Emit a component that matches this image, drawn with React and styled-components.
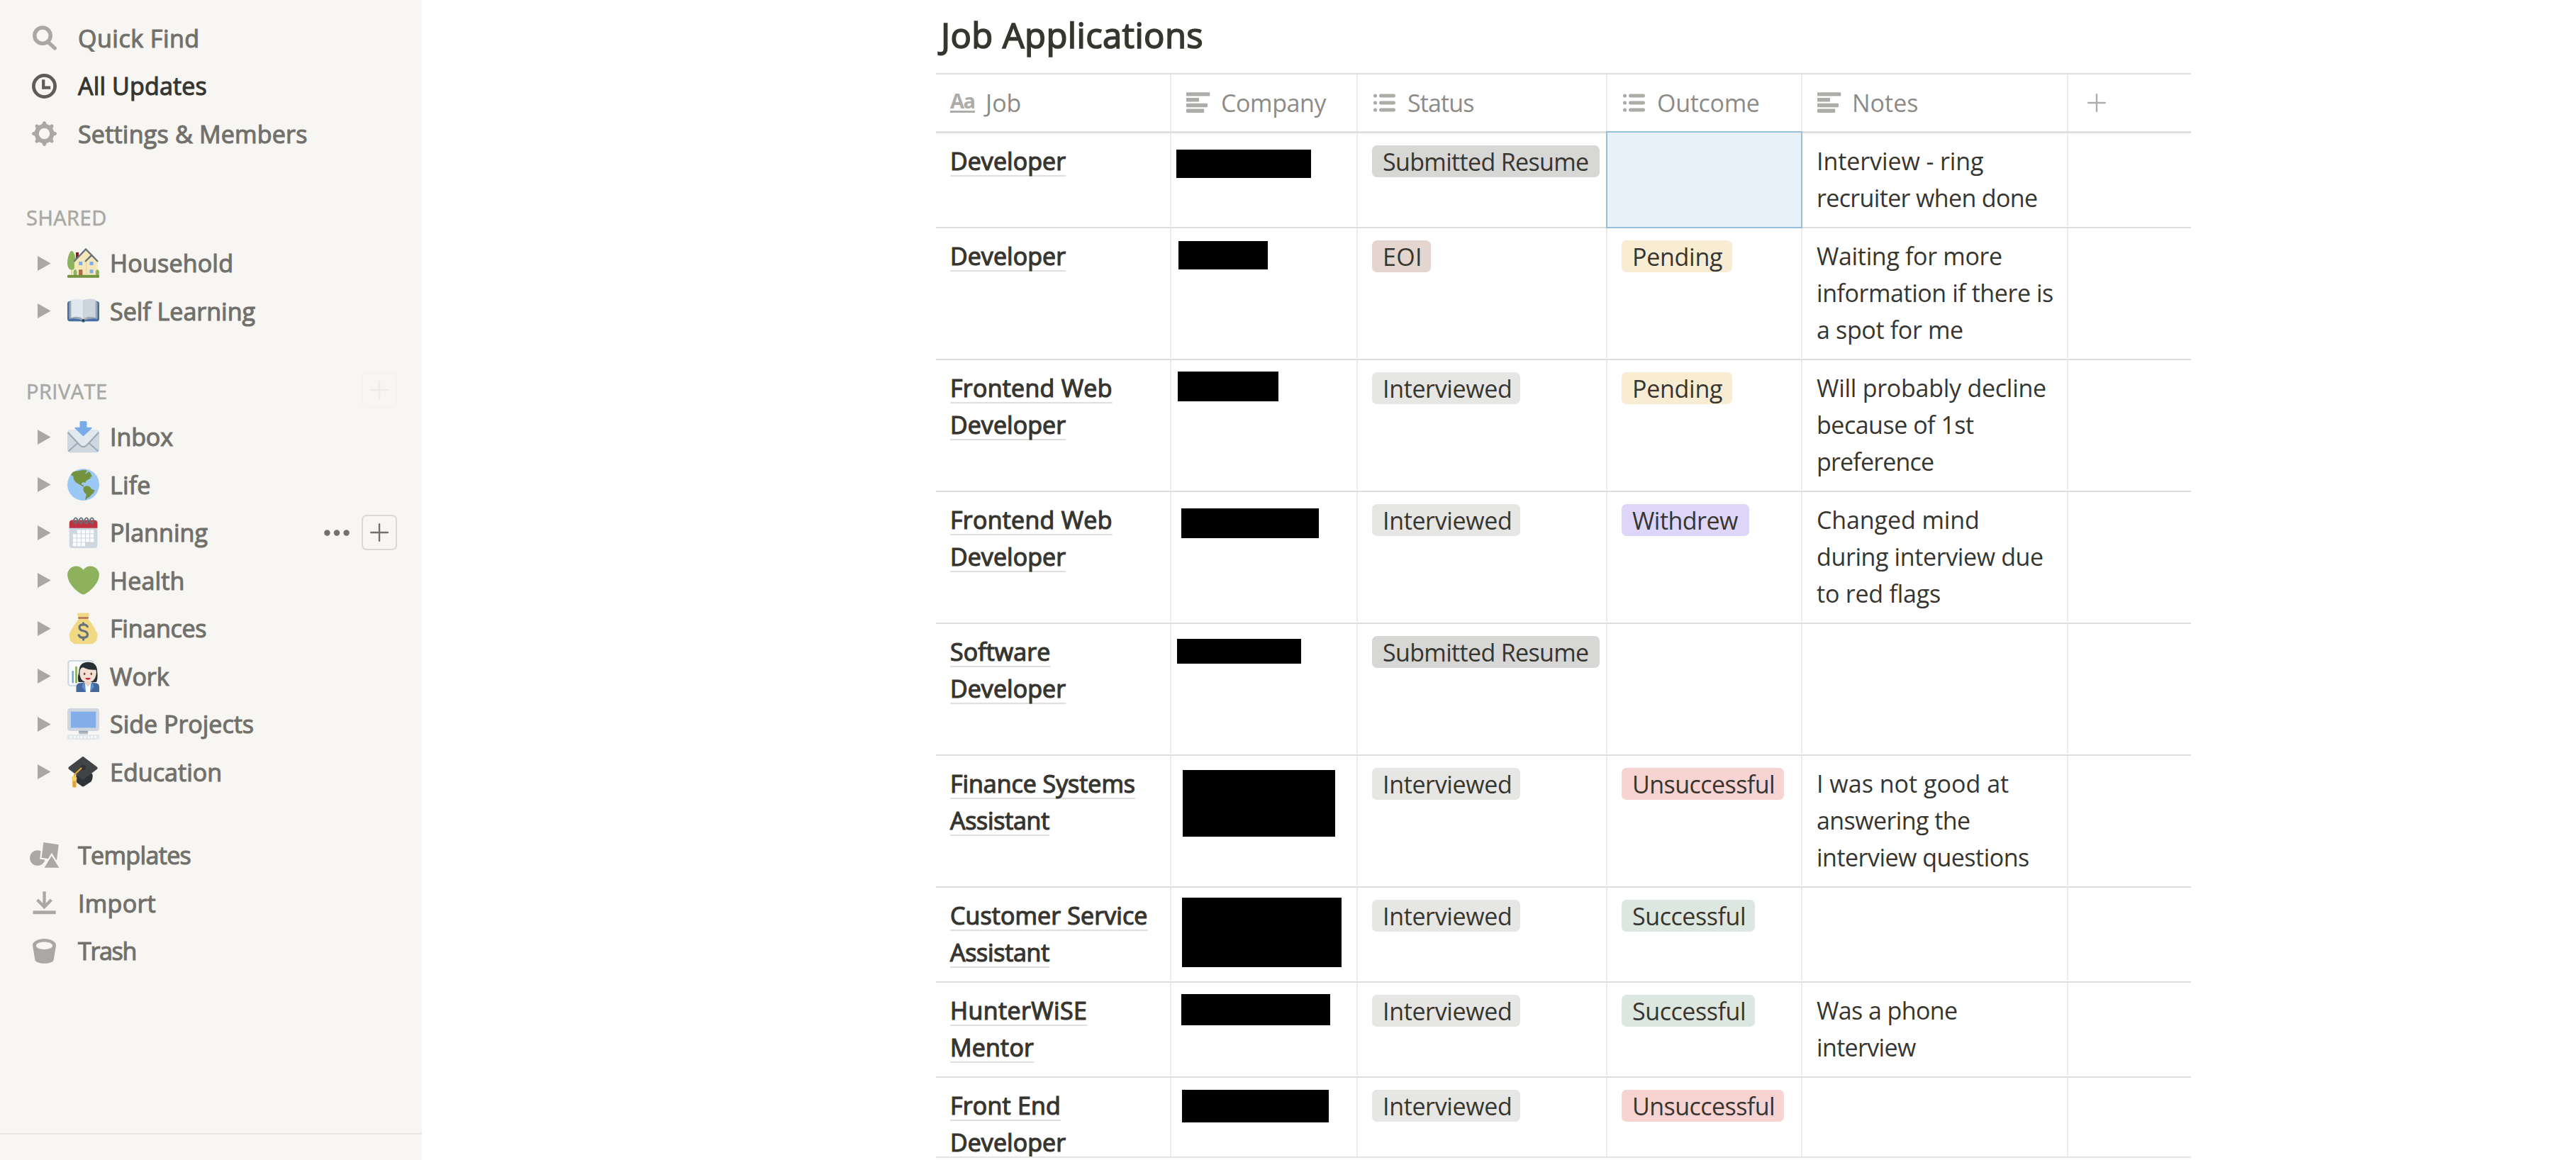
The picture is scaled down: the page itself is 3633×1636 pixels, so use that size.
import React from "react";
import styled, { createGlobalStyle, css } from "styled-components";

const GlobalStyle = createGlobalStyle`
  * { box-sizing: border-box; }
  body { margin: 0; background: #fff; }
`;

const ink = "#37352f";
const muted = "#72706b";
const iconGrey = "#a9a8a4";
const sand = "#f7f6f3";
const rule = "#dededd";
const faintRule = "#ececeb";

const Page = styled.div`
  display: flex;
  width: 100%;
  height: 1636px;
  overflow: hidden;
  background: #fff;
  color: ${ink};
  font-family: "Open Sans", "Noto Sans", sans-serif;
  font-size: 34px;
`;

/* ---------- sidebar ---------- */

const Sidebar = styled.aside`
  display: flex;
  flex-direction: column;
  justify-content: space-between;
  flex: none;
  width: 595px;
  background: ${sand};
`;

const SidebarScroll = styled.div`
  padding-top: 20px;
`;

const SidebarFooter = styled.div`
  height: 38px;
  border-top: 2px solid #e7e6e3;
`;

const NavGroup = styled.nav`
  display: flex;
  flex-direction: column;
  margin-top: ${(p) => p.$gap || 0}px;
`;

const NavLink = styled.a`
  display: flex;
  align-items: center;
  height: 67.5px;
  padding-left: 35px;
  color: ${(p) => (p.$active ? ink : muted)};
`;

const NavIcon = styled.span`
  display: flex;
  justify-content: center;
  width: 55px;
  margin-right: 20px;
  color: ${(p) => (p.$active ? "#5e5c57" : iconGrey)};
`;

const Label = styled.span`
  white-space: nowrap;
  letter-spacing: ${(p) => p.$track || 0}px;
  -webkit-text-stroke: 1.1px currentColor;
`;

const SectionHead = styled.div`
  display: flex;
  align-items: center;
  justify-content: space-between;
  height: 65px;
  padding: 0 35px 0 37px;
  color: ${iconGrey};
  font-size: 29px;
`;

const SectionTitle = styled.span`
  padding-top: 2px;
  letter-spacing: ${(p) => p.$track || 0}px;
  -webkit-text-stroke: 0.6px currentColor;
`;

const PageRow = styled.a`
  display: flex;
  align-items: center;
  height: 67.5px;
  padding: 0 35px 0 52.5px;
  color: ${muted};
`;

const Toggle = styled.svg`
  flex: none;
  width: 19px;
  height: 21px;
  margin-right: 23.5px;
  fill: ${iconGrey};
`;

const Emoji = styled.svg`
  flex: none;
  width: 45px;
  height: 45px;
  margin-right: 15px;
  overflow: visible;
`;

const RowActions = styled.span`
  display: flex;
  align-items: center;
  gap: 17px;
  margin-left: auto;
`;

const PlusButton = styled.span`
  display: flex;
  align-items: center;
  justify-content: center;
  width: 50px;
  height: 50px;
  border: 2px solid #dad9d6;
  border-radius: 7px;
  color: ${muted};
  opacity: ${(p) => (p.$faint ? 0.07 : 1)};
`;

/* ---------- table ---------- */

const Main = styled.main`
  flex: 1;
  padding-left: 725px;
`;

const Title = styled.h3`
  display: flex;
  align-items: center;
  height: 103px;
  margin: 0;
  padding: 0 0 5px 7px;
  font-size: 49px;
  font-weight: 400;
  letter-spacing: ${(p) => p.$track || 0}px;
  -webkit-text-stroke: 1.6px ${ink};
`;

const TableClip = styled.div`
  width: 1770px;
  height: 1530px;
  overflow: hidden;
  border-top: 2px solid ${rule};
  border-bottom: 2px solid #e4e4e3;
`;

const columns = css`
  display: grid;
  grid-template-columns: 332px 263px 352px 275px 375px 173px;
`;

const HeadRow = styled.div`
  ${columns}
  height: 83px;
  border-bottom: 3px solid ${rule};
`;

const HeadCell = styled.div`
  display: flex;
  align-items: center;
  padding-left: 20px;
  border-right: 2px solid ${faintRule};
  color: #8d8b87;
`;

const AddColumnCell = styled.div`
  display: flex;
  align-items: center;
  padding-left: 27px;
  color: #adaca9;
`;

const HeadIcon = styled.span`
  display: flex;
  justify-content: center;
  flex: none;
  width: 35px;
  margin-right: 15px;
  color: #adaca9;
`;

const HeadLabel = styled.span`
  letter-spacing: ${(p) => p.$track || 0}px;
`;

const TitleGlyph = styled.span`
  width: 35px;
  height: 28px;
  border-bottom: 3px solid #adaca9;
  font-size: 29px;
  font-weight: 700;
  line-height: 22px;
  letter-spacing: -1.5px;
`;

const Row = styled.div`
  ${columns}
  height: ${(p) => p.$lines * 52 + 30}px;
  padding-bottom: 1px;
  border-bottom: 2px solid ${rule};
`;

const Cell = styled.div`
  position: relative;
  padding: 13px 0 0 20px;
  border-right: 2px solid ${faintRule};
  line-height: 52px;
  white-space: nowrap;
  &:last-child { border-right: 0; }
`;

const Line = styled.div`
  letter-spacing: ${(p) => p.$track || 0}px;
`;

const JobLine = styled.div`
  letter-spacing: ${(p) => p.$track || 0}px;
  -webkit-text-stroke: 1.2px ${ink};
  text-decoration: underline;
  text-decoration-color: ${rule};
  text-decoration-thickness: 2px;
  text-underline-offset: 7px;
  text-decoration-skip-ink: none;
`;

const CompanyCell = styled(Cell)`
  padding: 0;
`;

const Redaction = styled.div`
  width: ${(p) => p.$w}px;
  height: ${(p) => p.$h}px;
  margin: ${(p) => p.$y}px 0 0 ${(p) => p.$x}px;
  background: #000;
`;

const TagCell = styled(Cell)`
  padding-top: 17px;
`;

const tones = {
  grey: "#d7d7d5",
  light: "#e6e6e4",
  brown: "#e4d6ce",
  yellow: "#f8edd3",
  purple: "#ddd6f8",
  red: "#f7d3d1",
  green: "#dde7e1",
};

const Tag = styled.div`
  width: ${(p) => p.$w}px;
  height: 45px;
  padding-left: 15px;
  border-radius: 7px;
  background: ${(p) => tones[p.$tone]};
  line-height: 47px;
  letter-spacing: ${(p) => p.$track || 0}px;
`;

const Selection = styled.div`
  position: absolute;
  inset: -3px -2px -3px -2px;
  border: 2px solid #96bfde;
  background: #e8f0f8;
`;

/* ---------- interface icons ---------- */

const Plus = ({ size = 26, stroke = 2.4 }) => (
  <svg width={size} height={size} viewBox="0 0 26 26" stroke="currentColor" strokeWidth={stroke} strokeLinecap="round">
    <path d="M13 1.2V24.8M1.2 13H24.8" />
  </svg>
);

const Dots = () => (
  <svg width="36" height="9" viewBox="0 0 36 9" fill={muted}>
    <circle cx="4.4" cy="4.5" r="4.2" />
    <circle cx="18" cy="4.5" r="4.2" />
    <circle cx="31.6" cy="4.5" r="4.2" />
  </svg>
);

const SearchIcon = () => (
  <svg width="35" height="35" viewBox="0 0 35 35" fill="none" stroke="currentColor">
    <circle cx="15" cy="14.2" r="11.2" strokeWidth="5.4" />
    <path d="M23 23.5L32.3 32" strokeWidth="5.2" strokeLinecap="round" />
  </svg>
);

const ClockIcon = () => (
  <svg width="35" height="35" viewBox="0 0 35 35" fill="none" stroke="currentColor">
    <circle cx="17.5" cy="17.5" r="15.1" strokeWidth="4.8" />
    <path d="M16.2 8.3V19.6H26.2" strokeWidth="4.2" />
  </svg>
);

const GearIcon = () => (
  <svg width="35" height="35" viewBox="0 0 35 35">
    <circle cx="17.5" cy="17.5" r="10.7" fill="none" stroke="currentColor" strokeWidth="6" />
    {[0, 45, 90, 135, 180, 225, 270, 315].map((a) => (
      <path
        key={a}
        fill="currentColor"
        transform={`rotate(${a} 17.5 17.5)`}
        d="M11.6 6.2Q14.4 5.4 15.3 1.6Q15.6 0 17.5 0Q19.4 0 19.7 1.6Q20.6 5.4 23.4 6.2Z"
      />
    ))}
  </svg>
);

const TemplatesIcon = () => (
  <svg width="42" height="36" viewBox="0 0 42 36" fill="currentColor">
    <circle cx="10.9" cy="22" r="10.8" />
    <path d="M19.4 0L40.7 3.3L38 25L16.6 21.7Z" stroke={sand} strokeWidth="4.4" paintOrder="stroke" />
    <path d="M30.9 19L41.3 35.7H20.5Z" stroke={sand} strokeWidth="4.4" paintOrder="stroke" />
  </svg>
);

const ImportIcon = () => (
  <svg width="35" height="35" viewBox="0 0 35 35">
    <path d="M17.5 1.3V23M7.6 13L17.5 23.2L27.4 13" fill="none" stroke="currentColor" strokeWidth="4.3" />
    <rect x="1.5" y="28.4" width="32.2" height="4.8" fill="currentColor" />
  </svg>
);

const TrashIcon = () => (
  <svg width="35" height="35" viewBox="0 0 35 35" fill="currentColor" fillRule="evenodd">
    <path d="M17.5 0C26.6 0 34.1 4 34.1 9.2L30.6 30C30 33 24 34.8 17.5 34.8S5 33 4.4 30L.9 9.2C.9 4 8.4 0 17.5 0ZM17.5 4.6C11 4.6 6 6.8 6 9.7S11 14.9 17.5 14.9S29 12.6 29 9.7S24 4.6 17.5 4.6Z" />
  </svg>
);

const TextIcon = () => (
  <svg width="34" height="30" viewBox="0 0 34 30" fill="currentColor">
    <rect x="0" y="0.2" width="33.3" height="5.4" rx="1" />
    <rect x="0" y="8" width="18" height="5.4" rx="1" />
    <rect x="0" y="15.8" width="30" height="5.4" rx="1" />
    <rect x="0" y="23.6" width="25.2" height="5.4" rx="1" />
  </svg>
);

const ListIcon = () => (
  <svg width="31" height="26" viewBox="0 0 31 26" fill="currentColor">
    {[3, 13, 23].map((y) => (
      <g key={y}>
        <circle cx="2.5" cy={y} r="2.6" />
        <rect x="8" y={y - 2.6} width="23" height="5.2" rx="2.4" />
      </g>
    ))}
  </svg>
);

/* ---------- page emoji, drawn on a 36-unit grid ---------- */

const House = () => (
  <>
    <path d="M4.3 24H5.6V31H4.3Z" fill="#f2cf5b" />
    <path d="M4.9 3.8C7 3.8 9.8 11 9.8 17.5C9.8 22.6 7.6 25.2 4.9 25.2S0 22.6 0 17.5C0 11 2.8 3.8 4.9 3.8Z" fill="#8db35e" />
    <rect x="9.6" y="5.5" width="3.2" height="7" fill="#8e1b22" />
    <path d="M7.9 31V14.4L20.6 2.4L27.4 8.6L34 15V31Z" fill="#f5e7b8" />
    <path d="M20.8 15.5V31H21.7V14.6Z" fill="#f0d67a" />
    <path d="M7.9 15.4L20.8 2L34 15.4M20.6 15.4L27.4 8.7" fill="none" stroke="#66717b" strokeWidth="1.9" strokeLinecap="round" />
    <path d="M13 16H17V20H13ZM25.2 16H29.2V20H25.2ZM25.2 25H29.2V29H25.2Z" fill="#7cadf0" />
    <rect x="12.9" y="25" width="4.2" height="6.2" fill="#ad694a" />
    <ellipse cx="8.8" cy="28.6" rx="2" ry="3.6" fill="#8db35e" />
    <ellipse cx="33.9" cy="28.6" rx="2" ry="3.6" fill="#8db35e" />
    <rect x="0" y="30.9" width="36" height="3.2" rx="1" fill="#74933e" />
  </>
);

const Book = () => (
  <>
    <rect x="0" y="7" width="36" height="22.8" rx="3" fill="#4a6fa3" />
    <path d="M16 29H20Q20 31 18 31T16 29Z" fill="#4a6fa3" />
    <path d="M2 8.5L4.3 6H31.7L34 8.5V27Q26 25.6 18 28.8Q10 25.6 2 27Z" fill="#9aa9b4" />
    <path d="M4.3 5.4Q12 3.2 18 5.6V27.4Q12.5 23 4.3 25.6Z" fill="#e1e7ee" />
    <path d="M31.7 5.4Q24 3.2 18 5.6V27.4Q23.5 23 31.7 25.6Z" fill="#ccd5de" />
    <circle cx="18" cy="28.4" r="1.3" fill="#2a3238" />
  </>
);

const Envelope = () => (
  <>
    <rect x="0" y="9.7" width="36" height="25.6" rx="3.3" fill="#cfd7e0" />
    <path d="M1.2 34L12 24.3M34.8 34L24 24.3" stroke="#9aa8b3" strokeWidth="1.5" />
    <path d="M1.2 11.2Q2 9.7 3.6 9.7H32.4Q34 9.7 34.8 11.2L22 26.6Q18 30.6 14 26.6Z" fill="#e1e8ee" />
    <path d="M.6 12.8L14 27Q18 30.8 22 27L35.4 12.8" fill="none" stroke="#9aa8b3" strokeWidth="1.5" />
    <path d="M15.2 0H20.8Q22 0 22 1.2V7H27Q28.6 7 27.5 8.2L19 16.2Q18 17 17 16.2L8.5 8.2Q7.4 7 9 7H14V1.2Q14 0 15.2 0Z" fill="#78ace9" />
  </>
);

const Globe = () => (
  <>
    <circle cx="18" cy="18" r="18" fill="#9cc8f5" />
    <path
      fill="#74933e"
      d="M3.9 6.8L6.5 3.6L9.8 2.8L13.3 2.4L17.9 1.4L22 1.8L21.7 3.8L20 5.1L21.4 5.7L22.4 4.2L24.1 3.6L23.8 2.8L26 4.5L27.8 8.7L25.5 9.6L26.2 11L22.8 12.5L20.6 14.4L20.6 16L17.9 15.2L15.9 16.4L16.5 18.6L18.2 17.9L18 19.8L20 20.6L17.3 20.2L13 17.4L9.5 15.4L7 11.7L6.8 8.7ZM18.2 20.9L21.4 19.2L25.5 20.3L27.1 22.8L30.9 24.4L29.5 27.4L27.1 29.3L24.9 32L22.5 33L20.9 35L20 34.7L21.1 30.9L21.4 28.7L19 26.6L17.9 23.8Z"
    />
  </>
);

const Calendar = () => (
  <>
    <path d="M2.2 7H33.9V31.8Q33.9 35.2 30.5 35.2H5.6Q2.2 35.2 2.2 31.8Z" fill="#ced6df" />
    <path d="M2.2 12.6V7Q2.2 3.6 5.6 3.6H30.5Q33.9 3.6 33.9 7V12.6Z" fill="#be3340" />
    {[14.7, 19.5, 24.3, 29.1].map((y, r) =>
      [6.2, 11.1, 16, 20.9, 25.8].map((x, c) =>
        (r === 0 && c === 0) || (r === 3 && c > 2) ? null : <rect key={x + y} x={x} y={y} width="4" height="4" fill="#fff" />
      )
    )}
    {[8.6, 14.7, 20.8, 26.9].map((x) => (
      <path key={x} d={`M${x} 6.8Q${x - 2.4} 5.6 ${x - 1.2} 3Q${x + 0.6} -.4 ${x + 2.4} 2.2Q${x + 3.2} 5 ${x + 1} 7.6`} fill="none" stroke="#66717b" strokeWidth="1.5" strokeLinecap="round" />
    ))}
  </>
);

const Heart = () => (
  <path
    fill="#8db15c"
    d="M35.9 11.8c0-5.4-4.4-9.8-9.9-9.8-3.3 0-6.2 1.6-8 4.1C16.2 3.6 13.3 2 10 2 4.5 2 .1 6.4.1 11.8c0 .8.1 1.6.3 2.3C1.8 22.6 11.2 31.6 18 34c6.8-2.4 16.2-11.4 17.600-19.900.2-.7.3-1.500.3-2.300z"
  />
);

const MoneyBag = () => (
  <>
    <path d="M11.2 1.6Q11.5 0 13.5 .6Q15.5 -.2 17 .6Q18.5 -.2 20.5 .5Q23 -.2 24.6 1.4Q25.4 2.4 24 4L23.5 7.5Q28 12 30.8 17.5Q32 20 32.6 21.5Q35 24 33.4 28Q34 32 30.5 33.5Q29 35.6 26 35.4H10Q7 35.6 5.5 33.5Q2.2 32 2.8 28.5Q1.4 24.5 3.6 21.5Q5 17 12.6 7.5L12 4Q10.6 2.6 11.2 1.6Z" fill="#f1d883" />
    <rect x="12" y="5" width="12" height="1.9" rx=".9" fill="#b2705a" />
    <path d="M22.7 15.8Q21.4 13.4 18 13.4Q13.6 13.6 13.6 16.7Q13.6 19.6 18 20.6Q22.8 21.6 22.8 24.9Q22.6 28.2 18 28.3Q14.2 28.3 12.9 25.4M18 11.8V14M18 28V30.5" fill="none" stroke="#66717b" strokeWidth="2.5" strokeLinecap="round" />
  </>
);

const Presenter = () => (
  <>
    <rect x="1.1" y=".8" width="28" height="28" rx="2.5" fill="#fafbfd" stroke="#ced6df" strokeWidth="1.7" />
    <rect x="5.2" y="12" width="1.9" height="14" rx=".9" fill="#6ea2e6" />
    <rect x="8.9" y="7" width="2.2" height="19" rx=".9" fill="#8db15c" />
    <path d="M12.6 24.7Q11 20 13 14Q13 2.2 23.3 2.2Q34 2.2 33.8 14Q34.6 20 32.8 24.7Z" fill="#2a2f33" />
    <path d="M19.5 22H26.5V29H19.5Z" fill="#ead2c4" />
    <path d="M14 14.5Q14 8 18 8.2Q24 11.5 32.4 11Q33 14 32.4 16.5Q31 24.8 23.2 24.8Q15.5 24.8 14.3 17.5Q13.6 16 14 14.5Z" fill="#f3dfd3" />
    <ellipse cx="19.3" cy="15.4" rx="1" ry="1.5" fill="#7a4a3a" />
    <ellipse cx="27" cy="15.4" rx="1" ry="1.5" fill="#7a4a3a" />
    <path d="M20.3 20H26Q25.8 22.2 23.2 22.2T20.3 20Z" fill="#d8273a" />
    <path d="M10 36V30.5Q10 25.8 15 25.8L19 25L23.2 34L27.5 25L31.5 25.8Q36 26 36 30.5V36Z" fill="#45689b" />
    <path d="M18.5 25L16.2 29.8L20.6 36H23.2L19.5 27ZM28 25L30.2 29.8L25.8 36H23.2L27 27Z" fill="#5c8fd0" />
    <path d="M20 26.6L23.2 30L26.5 26.6L25.6 36H20.9Z" fill="#fff" />
  </>
);

const Computer = () => (
  <>
    <rect x="0" y="0" width="36" height="25.5" rx="3.2" fill="#ced6df" />
    <rect x="3.9" y="3.7" width="28.3" height="18.2" fill="#82aee8" />
    <rect x="13" y="25.4" width="10.2" height="3.7" fill="#b3bec8" />
    <rect x="13" y="25.4" width="10.2" height="1.8" fill="#9aa9b4" />
    <rect x="0" y="29.5" width="36" height="5.8" rx="1.8" fill="#e1e8ee" />
    {[3.4, 7.3, 11.2, 15.1, 19, 22.9, 26.8, 30.7].map((x) => (
      <rect key={x} x={x} y="31.5" width="1.9" height="1.9" fill="#fff" />
    ))}
  </>
);

const Cap = () => (
  <>
    <path d="M9.5 22L28 20Q29.5 24 27 29L18.8 34.4Q17.6 35 16.4 34.4L10.5 30Z" fill="#2e3338" />
    <path d="M16.2 1.5Q17.6 .2 19 1.5L33.6 12.6Q34.8 13.8 33.6 15L19 26Q17.6 27.2 16.2 26L1.6 15Q.4 13.8 1.6 12.6Z" fill="#414446" />
    <ellipse cx="17.6" cy="13.2" rx="3.1" ry="2.9" fill="#2e3338" />
    <path d="M15.6 14L8.6 20.6Q7.8 21.5 7.8 23.5" fill="none" stroke="#e3a43c" strokeWidth="1.7" strokeLinecap="round" />
    <rect x="5.8" y="26.5" width="4.2" height="9" rx="1" fill="#e3a43c" />
    <circle cx="7.8" cy="25.5" r="2.9" fill="#f5cf61" />
  </>
);

/* ---------- content ---------- */

const topLinks = [
  { label: "Quick Find", icon: SearchIcon, track: 0.5 },
  { label: "All Updates", icon: ClockIcon, active: true, track: 0.15 },
  { label: "Settings & Members", icon: GearIcon, track: 0.22 },
];

const sharedPages = [
  { label: "Household", art: House, track: 0.2 },
  { label: "Self Learning", art: Book, track: 0 },
];

const privatePages = [
  { label: "Inbox", art: Envelope, track: -0.1 },
  { label: "Life", art: Globe, track: 0.2 },
  { label: "Planning", art: Calendar, hovered: true, track: 0.05 },
  { label: "Health", art: Heart, track: 0.15 },
  { label: "Finances", art: MoneyBag, track: -0.25 },
  { label: "Work", art: Presenter, track: 0 },
  { label: "Side Projects", art: Computer, track: 0 },
  { label: "Education", art: Cap, track: 0.05 },
];

const bottomLinks = [
  { label: "Templates", icon: TemplatesIcon, track: -0.65 },
  { label: "Import", icon: ImportIcon, track: 0.3 },
  { label: "Trash", icon: TrashIcon, track: -1.3 },
];

const submitted = { text: "Submitted Resume", tone: "grey", w: 321, track: -0.66 };
const interviewed = { text: "Interviewed", tone: "light", w: 209, track: -0.36 };
const eoi = { text: "EOI", tone: "brown", w: 83, track: 0.33 };
const pending = { text: "Pending", tone: "yellow", w: 156, track: -0.27 };
const withdrew = { text: "Withdrew", tone: "purple", w: 180, track: -0.53 };
const unsuccessful = { text: "Unsuccessful", tone: "red", w: 229, track: -0.55 };
const successful = { text: "Successful", tone: "green", w: 188, track: -0.43 };

const developer = ["Developer", 0.05];
const frontendWeb = ["Frontend Web", 0.25];
const assistant = ["Assistant", -0.3];

const applications = [
  { lines: 2, job: [developer], box: [7, 23, 190, 40], status: submitted, selected: true,
    notes: [["Interview - ring", -0.09], ["recruiter when done", -0.65]] },
  { lines: 3, job: [developer], box: [10, 18, 126, 40], status: eoi, outcome: pending,
    notes: [["Waiting for more", -0.34], ["information if there is", -0.44], ["a spot for me", -0.35]] },
  { lines: 3, job: [frontendWeb, developer], box: [9, 16, 142, 42], status: interviewed, outcome: pending,
    notes: [["Will probably decline", -0.26], ["because of 1st", -0.49], ["preference", -0.83]] },
  { lines: 3, job: [frontendWeb, developer], box: [14, 23, 194, 42], status: interviewed, outcome: withdrew,
    notes: [["Changed mind", -0.1], ["during interview due", -0.38], ["to red flags", -0.22]] },
  { lines: 3, job: [["Software", 0.05], developer], box: [8, 21, 175, 35], status: submitted, notes: [] },
  { lines: 3, job: [["Finance Systems", -0.05], assistant], box: [16, 20, 215, 94], status: interviewed, outcome: unsuccessful,
    notes: [["I was not good at", 0.02], ["answering the", -0.58], ["interview questions", -0.52]] },
  { lines: 2, job: [["Customer Service", 0.1], assistant], box: [15, 14, 225, 98], status: interviewed, outcome: successful, notes: [] },
  { lines: 2, job: [["HunterWiSE", 0.4], ["Mentor", 0.2]], box: [14, 16, 210, 44], status: interviewed, outcome: successful,
    notes: [["Was a phone", -0.6], ["interview", -0.65]] },
  { lines: 2, job: [["Front End", 0.2], developer], box: [15, 17, 207, 46], status: interviewed, outcome: unsuccessful, notes: [] },
];

function NavItem({ item }) {
  const Icon = item.icon;
  return (
    <NavLink $active={item.active}>
      <NavIcon $active={item.active}><Icon /></NavIcon>
      <Label $track={item.track}>{item.label}</Label>
    </NavLink>
  );
}

function PageItem({ page }) {
  const Art = page.art;
  return (
    <PageRow>
      <Toggle viewBox="0 0 19 21"><path d="M0 0L18.6 10.5L0 21Z" /></Toggle>
      <Emoji viewBox="0 0 36 36"><Art /></Emoji>
      <Label $track={page.track}>{page.label}</Label>
      {page.hovered && (
        <RowActions>
          <Dots />
          <PlusButton><Plus /></PlusButton>
        </RowActions>
      )}
    </PageRow>
  );
}

function StatusTag({ tag }) {
  return <Tag $tone={tag.tone} $w={tag.w} $track={tag.track}>{tag.text}</Tag>;
}

export default function App() {
  return (
    <Page>
      <GlobalStyle />
      <Sidebar>
        <SidebarScroll>
          <NavGroup>
            {topLinks.map((item) => <NavItem key={item.label} item={item} />)}
          </NavGroup>
          <NavGroup $gap={50}>
            <SectionHead><SectionTitle $track={0.5}>SHARED</SectionTitle></SectionHead>
            {sharedPages.map((page) => <PageItem key={page.label} page={page} />)}
          </NavGroup>
          <NavGroup $gap={45}>
            <SectionHead>
              <SectionTitle $track={0.5}>PRIVATE</SectionTitle>
              <PlusButton $faint><Plus /></PlusButton>
            </SectionHead>
            {privatePages.map((page) => <PageItem key={page.label} page={page} />)}
          </NavGroup>
          <NavGroup $gap={50}>
            {bottomLinks.map((item) => <NavItem key={item.label} item={item} />)}
          </NavGroup>
        </SidebarScroll>
        <SidebarFooter />
      </Sidebar>
      <Main>
        <Title $track={0.35}>Job Applications</Title>
        <TableClip>
          <HeadRow>
            <HeadCell><HeadIcon><TitleGlyph>Aa</TitleGlyph></HeadIcon><HeadLabel>Job</HeadLabel></HeadCell>
            <HeadCell><HeadIcon><TextIcon /></HeadIcon><HeadLabel $track={-0.4}>Company</HeadLabel></HeadCell>
            <HeadCell><HeadIcon><ListIcon /></HeadIcon><HeadLabel $track={-0.9}>Status</HeadLabel></HeadCell>
            <HeadCell><HeadIcon><ListIcon /></HeadIcon><HeadLabel $track={-0.3}>Outcome</HeadLabel></HeadCell>
            <HeadCell><HeadIcon><TextIcon /></HeadIcon><HeadLabel>Notes</HeadLabel></HeadCell>
            <AddColumnCell><Plus /></AddColumnCell>
          </HeadRow>
          {applications.map((row, i) => (
            <Row key={i} $lines={row.lines}>
              <Cell>{row.job.map(([t, track]) => <JobLine key={t} $track={track}>{t}</JobLine>)}</Cell>
              <CompanyCell>
                <Redaction $x={row.box[0]} $y={row.box[1]} $w={row.box[2]} $h={row.box[3]} />
              </CompanyCell>
              <TagCell><StatusTag tag={row.status} /></TagCell>
              <TagCell>
                {row.outcome && <StatusTag tag={row.outcome} />}
                {row.selected && <Selection />}
              </TagCell>
              <Cell>{row.notes.map(([t, track]) => <Line key={t} $track={track}>{t}</Line>)}</Cell>
              <Cell />
            </Row>
          ))}
        </TableClip>
      </Main>
    </Page>
  );
}
